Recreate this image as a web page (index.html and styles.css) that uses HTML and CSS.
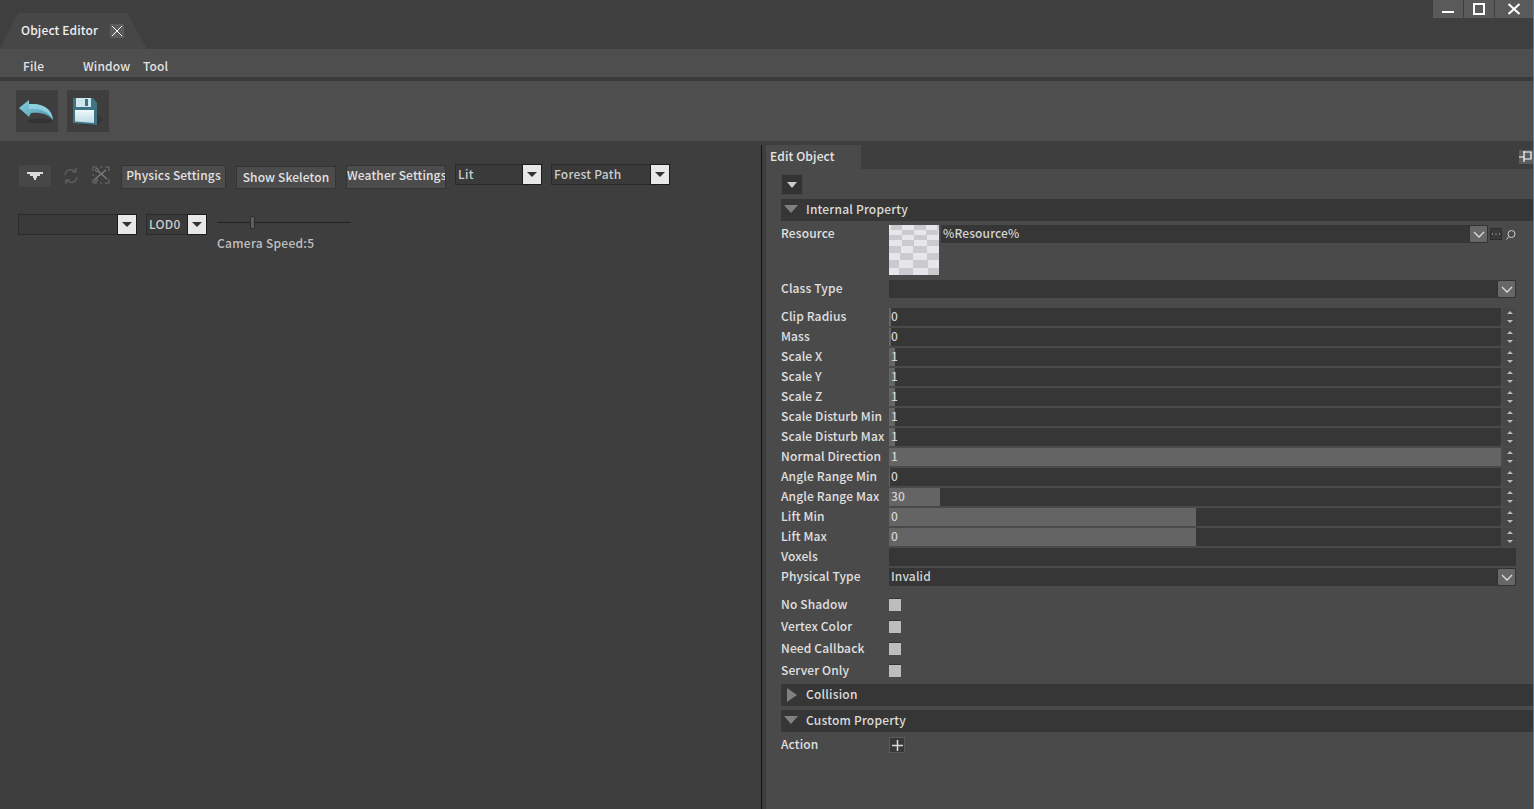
FILE: index.html
```html
<!DOCTYPE html>
<html lang="en">
<head>
    <meta charset="UTF-8">
    <title>Object Editor</title>
    <link rel="stylesheet" href="styles.css">
</head>
<body>
    <div class="title-bar">
        <div class="doc-tab">
            <span>Object Editor</span>
            <span class="tab-close">
                <svg width="14" height="14" viewBox="0 0 14 14"><path d="M2 2L12 12M12 2L2 12" stroke="#fff" stroke-width="1"/></svg>
            </span>
        </div>
        <div class="window-buttons">
            <div class="win-btn win-min"><svg width="12" height="12" viewBox="0 0 12 12"><rect x="0" y="8" width="12" height="2" fill="#fff"/></svg></div>
            <div class="win-btn win-max"><svg width="12" height="12" viewBox="0 0 12 12"><rect x="1" y="1" width="10" height="10" fill="none" stroke="#fff" stroke-width="2"/></svg></div>
            <div class="win-btn win-close"><svg width="14" height="12" viewBox="0 0 14 12"><path d="M1.500 1L12.500 11M12.500 1L1.500 11" stroke="#fff" stroke-width="2"/></svg></div>
        </div>
    </div>

    <div class="menu-bar">
        <span class="menu-file">File</span>
        <span class="menu-window">Window</span>
        <span class="menu-tool">Tool</span>
    </div>

    <div class="tool-bar">
        <button class="tool-btn">
            <svg width="36" height="30" viewBox="0 0 36 30">
                <defs>
                    <linearGradient id="backFill" x1="0" y1="0" x2="1" y2="1">
                        <stop offset="0" stop-color="#86cfe2"/>
                        <stop offset="1" stop-color="#4e93a8"/>
                    </linearGradient>
                </defs>
                <ellipse cx="21" cy="25" rx="12" ry="2.500" fill="#333"/>
                <path d="M0 12L10 4V8C23 7 33 12 34 24C29 18 21 16 12 17L10 21Z" fill="url(#backFill)"/>
                <path d="M10 8C23 7 33 12 34 24C29 15 21 12 10 13Z" fill="#8fd0e0"/>
            </svg>
        </button>
        <button class="tool-btn">
            <svg width="34" height="34" viewBox="0 0 34 34">
                <defs>
                    <linearGradient id="saveFill" x1="0" y1="0" x2="0" y2="1">
                        <stop offset="0" stop-color="#f0f8fa"/>
                        <stop offset="1" stop-color="#bcdbe4"/>
                    </linearGradient>
                </defs>
                <g transform="translate(-4 1)">
                    <path d="M12 30L29 31L36 25L30 19Z" fill="#363636"/>
                    <path d="M6 3H26L30 8V30L6 28Z" fill="#3f7485"/>
                    <path d="M9 3H24V12H9Z" fill="#cfe7ee"/>
                    <rect x="18" y="4" width="3" height="7" fill="#3f7485"/>
                    <path d="M8 15H27V28L8 26.500Z" fill="url(#saveFill)"/>
                </g>
            </svg>
        </button>
    </div>

    <div class="workspace">
        <section class="viewport">
            <div class="view-row-a">
                <button class="arrow-btn"><svg width="16" height="8" viewBox="0 0 16 8"><path d="M0 0H16V2H13V4H10V6H9V8H7V6H6V4H3V2H0Z" fill="#ddd"/></svg></button>
                <svg class="dim-icon icon-refresh" width="16" height="18" viewBox="0 0 16 18"><path d="M2 8C2 4 6 1.500 10 3L13 5M14 10C14 14 10 16.500 6 15L3 13M13 1V5H9M3 17V13H7" fill="none" stroke="#636363" stroke-width="1.200"/></svg>
                <svg class="dim-icon icon-cut" width="18" height="18" viewBox="0 0 18 18"><path d="M1 5V1H5M8 1H10M13 1H17V5M1 8V10M17 13V17H13M10 17H8M5 17H1V13" fill="none" stroke="#6e6e6e"/><path d="M3 13L14 4M6 5L15 13" stroke="#7a7a7a" stroke-width="1.500"/><circle cx="5" cy="4" r="1.500" fill="none" stroke="#7a7a7a"/><circle cx="4" cy="14" r="1.500" fill="none" stroke="#7a7a7a"/></svg>
                <button class="flat-btn btn-physics">Physics Settings</button>
                <button class="flat-btn btn-skeleton">Show Skeleton</button>
                <button class="flat-btn btn-weather">Weather Settings</button>
                <div class="light-combo combo-lit"><span>Lit</span><i class="combo-arrow"></i></div>
                <div class="light-combo combo-path"><span>Forest Path</span><i class="combo-arrow"></i></div>
            </div>
            <div class="view-row-b">
                <div class="light-combo combo-empty"><span></span><i class="combo-arrow"></i></div>
                <div class="light-combo combo-lod"><span>LOD0</span><i class="combo-arrow"></i></div>
                <div class="cam-speed">
                    <div class="cam-track"><i class="cam-thumb"></i></div>
                    <div class="cam-label">Camera Speed:5</div>
                </div>
            </div>
        </section>

        <div class="split-line"></div>

        <section class="side-panel">
            <div class="panel-head">
                <div class="panel-tab">Edit Object</div>
                <div class="pin-btn"><svg width="14" height="12" viewBox="0 0 14 12"><path d="M0 6H5M5 1H12V8H5ZM5 0V11" fill="none" stroke="#fff" stroke-width="1.200"/></svg></div>
            </div>
            <div class="panel-body">
                <button class="collapse-btn"><svg width="10" height="6" viewBox="0 0 10 6"><path d="M0 0H10L5 6Z" fill="#ccc"/></svg></button>

                <div class="group-bar bar-internal"><i class="tri-down"></i>Internal Property</div>
                <div class="res-row">
                    <label>Resource</label>
                    <svg class="res-thumb" width="50" height="50" viewBox="0 0 50 50">
                        <rect width="50" height="50" fill="#e7e7eb"/>
                        <path fill="#cbcbcf" d="M2 0H13V5H2ZM25 0H37V5H25ZM48 0H50V5H48ZM13 5H25V10H13ZM37 5H49V10H37ZM0 10H13V15H0ZM25 10H38V15H25ZM13 15H25V21H13ZM38 15H50V21H38ZM0 21H12V28H0ZM24 21H38V28H24ZM11 28H24V35H11ZM38 28H50V35H38ZM0 35H10V43H0ZM24 35H39V43H24ZM10 43H24V50H10ZM39 43H50V50H39Z"/>
                    </svg>
                    <div class="res-field"><span>%Resource%</span><i class="chev-btn"><svg width="12" height="7" viewBox="0 0 12 7"><path d="M1 1L6 6L11 1" fill="none" stroke="#ddd" stroke-width="1.300"/></svg></i></div>
                    <div class="res-dots"><svg width="10" height="10" viewBox="0 0 10 10"><path d="M1 5H2M4.500 5H5.500M8 5H9" stroke="#ccc"/></svg></div>
                    <svg class="res-search" width="10" height="10" viewBox="0 0 10 10"><circle cx="5.500" cy="4" r="3.500" fill="none" stroke="#ccc"/><path d="M3 6.500L0.500 9.500" stroke="#ccc"/></svg>
                </div>

                <div class="prop-row row-class">
                    <label>Class Type</label>
                    <div class="combo-field"><span></span><i class="chev-btn"><svg width="12" height="7" viewBox="0 0 12 7"><path d="M1 1L6 6L11 1" fill="none" stroke="#ddd" stroke-width="1.300"/></svg></i></div>
                </div>

                <div class="num-list">
                    <div class="prop-row"><label>Clip Radius</label><div class="num-field"><i class="fill" style="width:2px"></i><span>0</span></div><i class="spin"></i></div>
                    <div class="prop-row"><label>Mass</label><div class="num-field"><i class="fill" style="width:2px"></i><span>0</span></div><i class="spin"></i></div>
                    <div class="prop-row"><label>Scale X</label><div class="num-field"><i class="fill" style="width:6px"></i><span>1</span></div><i class="spin"></i></div>
                    <div class="prop-row"><label>Scale Y</label><div class="num-field"><i class="fill" style="width:6px"></i><span>1</span></div><i class="spin"></i></div>
                    <div class="prop-row"><label>Scale Z</label><div class="num-field"><i class="fill" style="width:6px"></i><span>1</span></div><i class="spin"></i></div>
                    <div class="prop-row"><label>Scale Disturb Min</label><div class="num-field"><i class="fill" style="width:6px"></i><span>1</span></div><i class="spin"></i></div>
                    <div class="prop-row"><label>Scale Disturb Max</label><div class="num-field"><i class="fill" style="width:6px"></i><span>1</span></div><i class="spin"></i></div>
                    <div class="prop-row"><label>Normal Direction</label><div class="num-field"><i class="fill" style="width:612px"></i><span>1</span></div><i class="spin"></i></div>
                    <div class="prop-row"><label>Angle Range Min</label><div class="num-field"><i class="fill" style="width:1px"></i><span>0</span></div><i class="spin"></i></div>
                    <div class="prop-row"><label>Angle Range Max</label><div class="num-field"><i class="fill" style="width:51px"></i><span>30</span></div><i class="spin"></i></div>
                    <div class="prop-row"><label>Lift Min</label><div class="num-field"><i class="fill" style="width:307px"></i><span>0</span></div><i class="spin"></i></div>
                    <div class="prop-row"><label>Lift Max</label><div class="num-field"><i class="fill" style="width:307px"></i><span>0</span></div><i class="spin"></i></div>
                    <div class="prop-row"><label>Voxels</label><div class="combo-field"></div></div>
                    <div class="prop-row"><label>Physical Type</label>
                        <div class="combo-field"><span>Invalid</span><i class="chev-btn"><svg width="12" height="7" viewBox="0 0 12 7"><path d="M1 1L6 6L11 1" fill="none" stroke="#ddd" stroke-width="1.300"/></svg></i></div>
                    </div>
                </div>

                <div class="check-list">
                    <div class="check-row"><label>No Shadow</label><i class="check-box"></i></div>
                    <div class="check-row"><label>Vertex Color</label><i class="check-box"></i></div>
                    <div class="check-row"><label>Need Callback</label><i class="check-box"></i></div>
                    <div class="check-row"><label>Server Only</label><i class="check-box"></i></div>
                </div>

                <div class="group-bar bar-collision"><i class="tri-right"></i>Collision</div>
                <div class="group-bar bar-custom"><i class="tri-down"></i>Custom Property</div>
                <div class="action-row">
                    <label>Action</label>
                    <button class="add-btn"><svg width="11" height="11" viewBox="0 0 11 11"><path d="M5.500 0V11M0 5.500H11" stroke="#ddd" stroke-width="1.500"/></svg></button>
                </div>
            </div>
        </section>
    </div>
</body>
</html>
```

FILE: styles.css
```css
* {
    box-sizing: border-box;
}
html, body {
    margin: 0;
    height: 809px;
    overflow: hidden;
}
body {
    display: flex;
    flex-direction: column;
    background-color: #3e3e3e;
    border-right: 1px solid #2a8fd8;
    color: #e0e0e0;
    font-family: "Noto Sans CJK SC", "Noto Sans", sans-serif;
    font-size: 12px;
    font-weight: 500;
    line-height: 18px;
    letter-spacing: 0.13px;
}
button {
    font: inherit;
    letter-spacing: inherit;
    color: inherit;
    padding: 0;
    border: none;
}
label {
    display: block;
}

/* title bar */
.title-bar {
    height: 49px;
    background-color: #3f3f3f;
    display: flex;
    justify-content: space-between;
    align-items: flex-start;
}
.doc-tab {
    width: 147px;
    height: 36px;
    margin-top: 13px;
    padding: 8px 0 0 21px;
    display: flex;
    gap: 12px;
    background-color: #474747;
    clip-path: polygon(0 100%, 18px 0, 127px 0, 100% 100%);
    color: #f0f0f0;
}
.tab-close {
    width: 14px;
    height: 14px;
    margin-top: 3px;
    background-color: #5c5c5c;
    display: flex;
}
.window-buttons {
    display: flex;
    gap: 1px;
}
.win-btn {
    height: 18px;
    background-color: #5a5a5a;
    display: flex;
    align-items: center;
    justify-content: center;
}
.win-min { width: 30px; }
.win-max { width: 30px; }
.win-close { width: 38px; }

/* menus */
.menu-bar {
    height: 28px;
    background-color: #4e4e4e;
    padding: 8px 0 0 23px;
    display: flex;
    color: #e2e2e2;
}
.menu-file { width: 60px; }
.menu-window { width: 60px; }
.tool-bar {
    height: 64px;
    border-top: 4px solid #3a3a3a;
    background-color: #4e4e4e;
    padding: 9px 0 0 16px;
    display: flex;
    gap: 9px;
    align-items: flex-start;
}
.tool-btn {
    width: 42px;
    height: 42px;
    background-color: #3e3e3e;
    display: flex;
    align-items: center;
    justify-content: center;
}

/* main area */
.workspace {
    flex: 1;
    display: flex;
    min-height: 0;
}
.viewport {
    width: 761px;
    padding: 24px 0 0 18px;
}
.view-row-a {
    display: flex;
    align-items: flex-start;
    height: 24px;
}
.arrow-btn {
    width: 32px;
    height: 22px;
    margin-left: 1px;
    background-color: #474747;
    display: flex;
    align-items: center;
    justify-content: center;
}
.dim-icon {
    flex: none;
}
.icon-refresh {
    margin: 2px 0 0 12px;
}
.icon-cut {
    margin: 1px 0 0 13px;
}
.flat-btn {
    background-color: #4c4c4c;
    border: 1px solid #343434;
    color: #e2e2e2;
    white-space: nowrap;
    text-align: center;
}
.btn-physics {
    width: 105px;
    height: 24px;
    margin-left: 11px;
    padding-bottom: 4px;
}
.btn-skeleton {
    width: 100px;
    height: 23px;
    margin: 1px 0 0 10px;
    padding-bottom: 1px;
}
.btn-weather {
    width: 100px;
    height: 24px;
    margin-left: 10px;
    padding-bottom: 4px;
    overflow: hidden;
}
.light-combo {
    height: 21px;
    background-color: #3a3a3a;
    border: 1px solid #2a2a2a;
    display: flex;
    justify-content: space-between;
    padding-left: 2px;
    color: #cccccc;
    letter-spacing: 0.25px;
}
.combo-arrow {
    width: 20px;
    height: 21px;
    margin: -1px -1px -1px 0;
    background-color: #e8e8e8;
    border: 1px solid #1c1c1c;
    flex: none;
    position: relative;
}
.combo-arrow::after {
    content: "";
    position: absolute;
    left: 4px;
    top: 7px;
    border-left: 5px solid transparent;
    border-right: 5px solid transparent;
    border-top: 5px solid #333;
}
.combo-lit {
    width: 87px;
    margin: -1px 0 0 9px;
}
.combo-path {
    width: 119px;
    margin: -1px 0 0 9px;
}
.view-row-b {
    display: flex;
    align-items: flex-start;
    margin-top: 25px;
}
.combo-empty {
    width: 119px;
}
.combo-lod {
    width: 61px;
    margin-left: 9px;
}
.cam-speed {
    margin-left: 10px;
    width: 134px;
}
.cam-track {
    height: 1px;
    margin-top: 8px;
    background-color: #222;
    position: relative;
}
.cam-thumb {
    position: absolute;
    left: 33px;
    top: -6px;
    width: 5px;
    height: 13px;
    background-color: #5e5e5e;
    border: 1px solid #2c2c2c;
    border-radius: 2px 2px 0 0;
}
.cam-label {
    margin-top: 11px;
    color: #c0c0c0;
    letter-spacing: 0.28px;
}
.split-line {
    width: 1px;
    background-color: #111;
    margin-top: 4px;
}

/* edit object panel */
.side-panel {
    flex: 1;
    padding-left: 4px;
    display: flex;
    flex-direction: column;
    background-color: #3e3e3e;
}
.panel-head {
    height: 28px;
    padding-top: 4px;
    display: flex;
    justify-content: space-between;
    align-items: flex-start;
    background-color: #3e3e3e;
}
.panel-tab {
    width: 95px;
    height: 24px;
    background-color: #4a4a4a;
    padding: 2px 0 0 4px;
    color: #e6e6e6;
}
.pin-btn {
    width: 14px;
    height: 14px;
    margin-top: 5px;
    background-color: #5c5c5c;
    display: flex;
    align-items: center;
}
.panel-body {
    flex: 1;
    background-color: #4a4a4a;
    padding: 5px 0 0 15px;
}
.collapse-btn {
    width: 22px;
    height: 21px;
    background-color: #333;
    border: 1px solid #444;
    display: flex;
    align-items: center;
    justify-content: center;
}
.group-bar {
    height: 22px;
    background-color: #363636;
    padding: 1px 0 0 25px;
    position: relative;
    color: #dcdcdc;
    letter-spacing: 0.2px;
}
.bar-internal {
    margin-top: 4px;
}
.tri-down {
    position: absolute;
    left: 3px;
    top: 6px;
    border-left: 7px solid transparent;
    border-right: 7px solid transparent;
    border-top: 8px solid #808080;
}
.tri-right {
    position: absolute;
    left: 6px;
    top: 4px;
    border-top: 7px solid transparent;
    border-bottom: 7px solid transparent;
    border-left: 10px solid #808080;
}
.res-row {
    height: 53px;
    margin-top: 4px;
    display: flex;
    align-items: flex-start;
    line-height: 16px;
}
.res-row label {
    width: 108px;
}
.res-thumb {
    flex: none;
}
.res-field {
    width: 547px;
    height: 18px;
    margin-left: 2px;
    background-color: #363636;
    display: flex;
    justify-content: space-between;
    padding-left: 2px;
    color: #d4d4d4;
}
.res-dots {
    width: 12px;
    height: 12px;
    margin: 3px 0 0 2px;
    background-color: #3a3a3a;
    border: 1px solid #2c2c2c;
    display: flex;
}
.res-search {
    margin: 5px 0 0 4px;
}
.chev-btn {
    width: 19px;
    height: 18px;
    background-color: #676767;
    border: 1px solid #333;
    border-radius: 2px;
    display: flex;
    align-items: center;
    justify-content: center;
    flex: none;
}
.prop-row {
    height: 18px;
    display: flex;
    align-items: flex-start;
    line-height: 16px;
}
.prop-row label {
    width: 108px;
    flex: none;
    white-space: nowrap;
}
.row-class {
    margin-top: 2px;
}
.combo-field {
    width: 627px;
    height: 18px;
    background-color: #363636;
    display: flex;
    justify-content: space-between;
    padding-left: 2px;
    color: #d4d4d4;
}
.num-list {
    display: flex;
    flex-direction: column;
    gap: 2px;
    margin-top: 10px;
}
.num-field {
    width: 612px;
    height: 18px;
    background-color: #363636;
    position: relative;
    padding-left: 2px;
    flex: none;
    color: #d4d4d4;
}
.num-field span {
    position: relative;
}
.fill {
    position: absolute;
    left: 0;
    top: 0;
    bottom: 0;
    background-color: #646464;
}
.spin {
    width: 13px;
    height: 18px;
    margin-left: 2px;
    background-color: #474747;
    position: relative;
}
.spin::before, .spin::after {
    content: "";
    position: absolute;
    left: 4px;
    border-left: 3px solid transparent;
    border-right: 3px solid transparent;
}
.spin::before {
    top: 3px;
    border-bottom: 3px solid #bbb;
}
.spin::after {
    bottom: 3px;
    border-top: 3px solid #bbb;
}
.check-list {
    margin-top: 7px;
}
.check-row {
    height: 22px;
    display: flex;
    align-items: center;
}
.check-row label {
    width: 108px;
}
.check-box {
    width: 12px;
    height: 13px;
    background-color: #bdbdbd;
    border-top: 1px solid #333;
}
.bar-collision {
    margin-top: 3px;
}
.bar-custom {
    margin-top: 4px;
}
.action-row {
    display: flex;
    margin-top: 4px;
    align-items: flex-start;
    line-height: 16px;
}
.action-row label {
    width: 108px;
}
.add-btn {
    width: 16px;
    height: 16px;
    margin-top: 1px;
    background-color: #383838;
    border: 1px solid #5a5a5a;
    display: flex;
    align-items: center;
    justify-content: center;
}
```
